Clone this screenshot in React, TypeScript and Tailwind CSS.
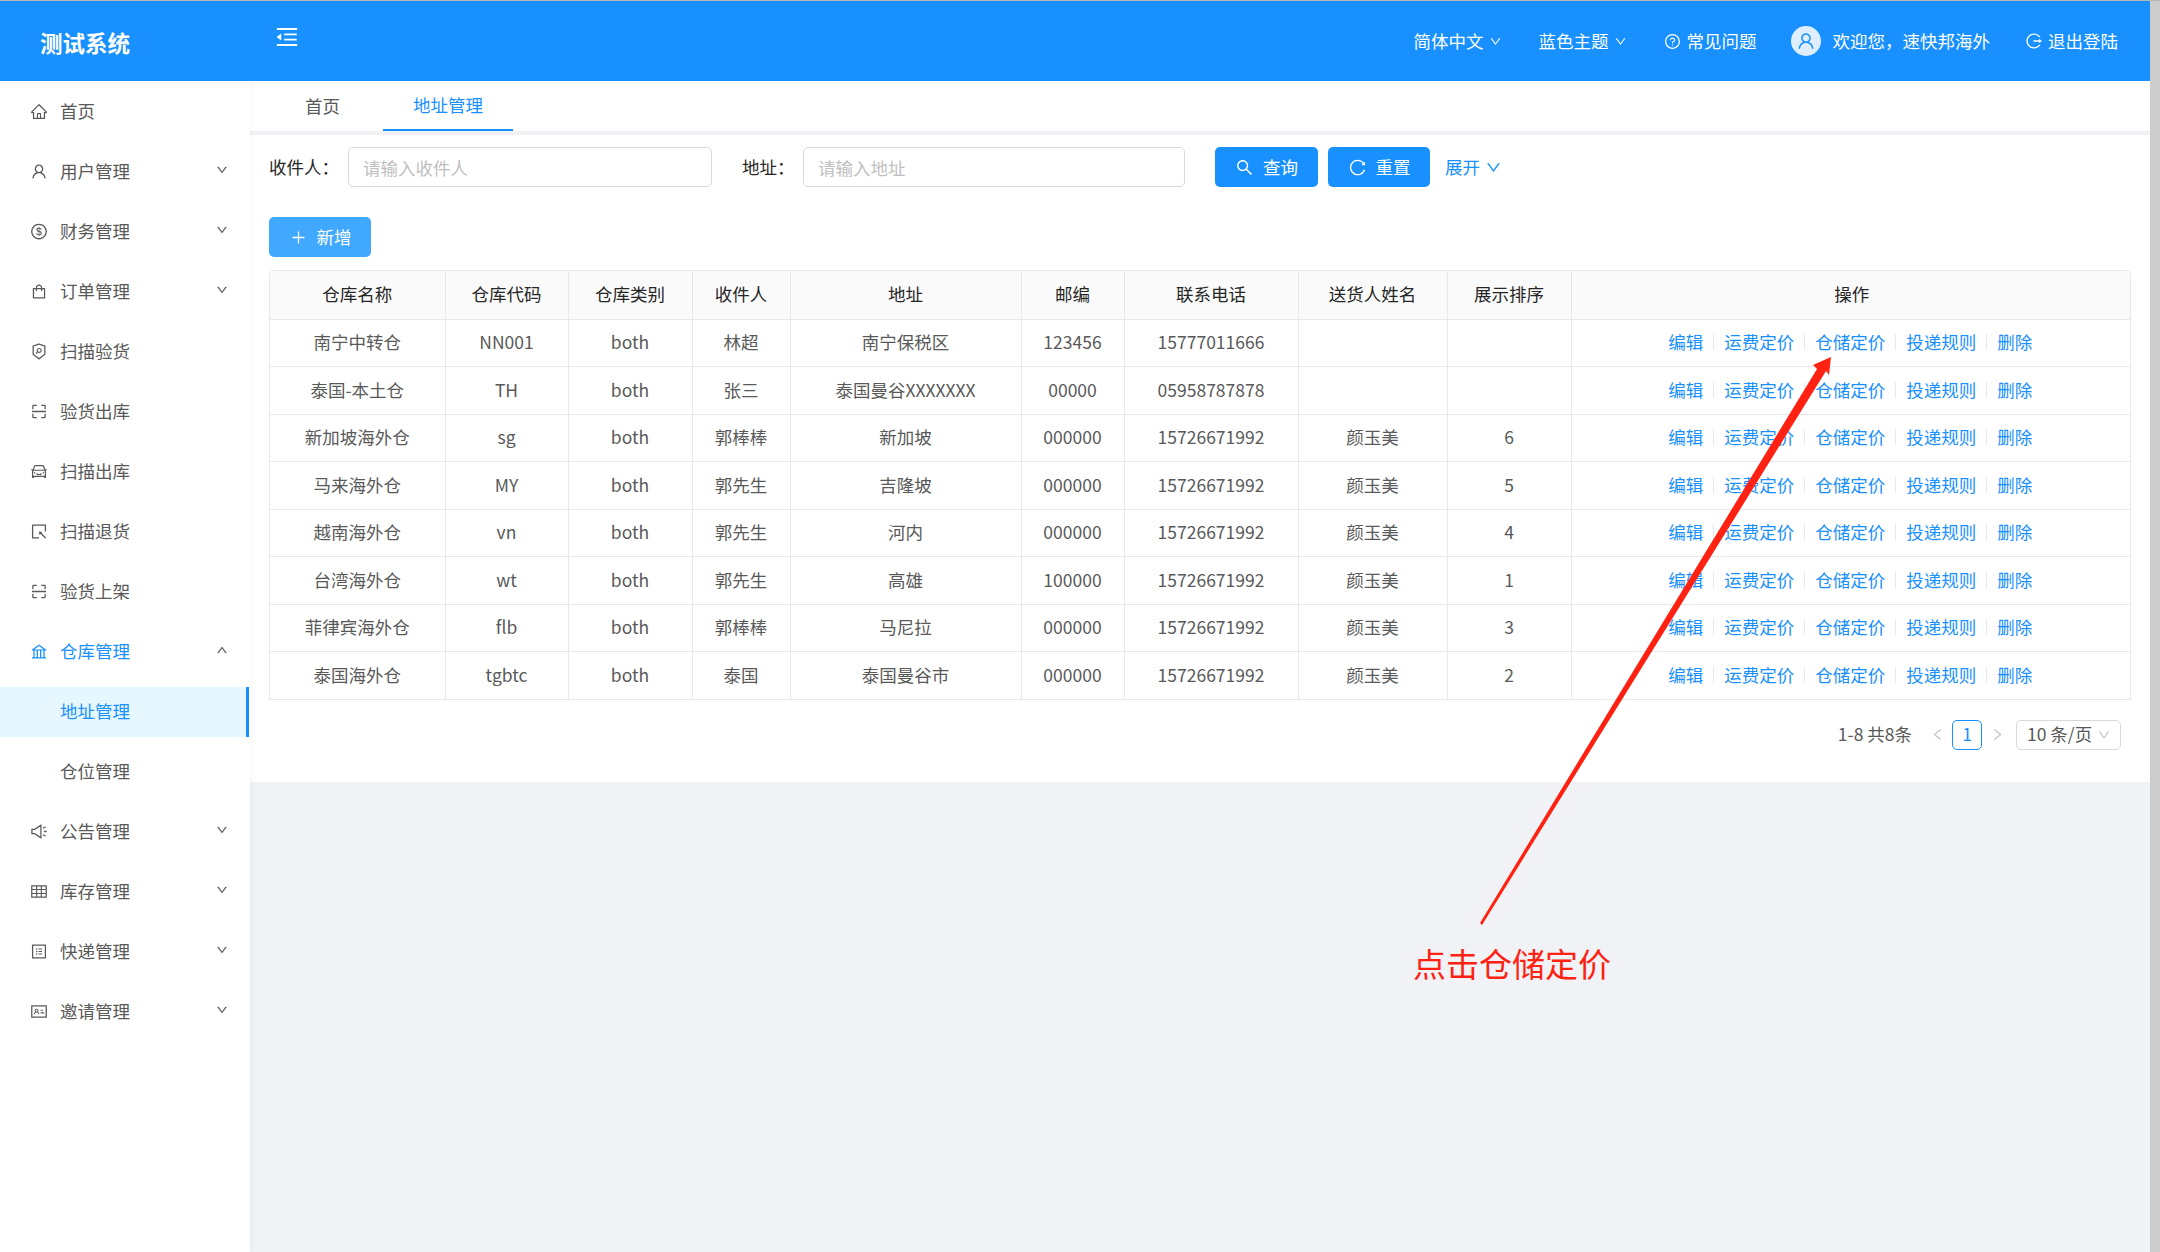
import React from "react";
import {
  AiOutlineHome, AiOutlineUser, AiOutlineDollar, AiOutlineShopping, AiOutlineSecurityScan, AiOutlineScan,
  AiOutlineCar, AiOutlineSelect, AiOutlineBank, AiOutlineSound, AiOutlineTable, AiOutlineProfile,
  AiOutlineIdcard, AiOutlineDown, AiOutlineUp, AiOutlineSearch, AiOutlineReload, AiOutlinePlus,
  AiOutlineQuestionCircle, AiOutlineLogout, AiOutlineMenuFold, AiOutlineLeft, AiOutlineRight,
} from "react-icons/ai";

const menu: { icon?: React.ComponentType<{ className?: string }>; label: string; arrow?: "down" | "up"; state?: string }[] = [
  { icon: AiOutlineHome, label: "首页" },
  { icon: AiOutlineUser, label: "用户管理", arrow: "down" },
  { icon: AiOutlineDollar, label: "财务管理", arrow: "down" },
  { icon: AiOutlineShopping, label: "订单管理", arrow: "down" },
  { icon: AiOutlineSecurityScan, label: "扫描验货" },
  { icon: AiOutlineScan, label: "验货出库" },
  { icon: AiOutlineCar, label: "扫描出库" },
  { icon: AiOutlineSelect, label: "扫描退货" },
  { icon: AiOutlineScan, label: "验货上架" },
  { icon: AiOutlineBank, label: "仓库管理", arrow: "up", state: "open" },
  { label: "地址管理", state: "active" },
  { label: "仓位管理" },
  { icon: AiOutlineSound, label: "公告管理", arrow: "down" },
  { icon: AiOutlineTable, label: "库存管理", arrow: "down" },
  { icon: AiOutlineProfile, label: "快递管理", arrow: "down" },
  { icon: AiOutlineIdcard, label: "邀请管理", arrow: "down" },
];

const rows = [
  ["南宁中转仓", "NN001", "both", "林超", "南宁保税区", "123456", "15777011666", "", ""],
  ["泰国-本土仓", "TH", "both", "张三", "泰国曼谷XXXXXXX", "00000", "05958787878", "", ""],
  ["新加坡海外仓", "sg", "both", "郭棒棒", "新加坡", "000000", "15726671992", "颜玉美", "6"],
  ["马来海外仓", "MY", "both", "郭先生", "吉隆坡", "000000", "15726671992", "颜玉美", "5"],
  ["越南海外仓", "vn", "both", "郭先生", "河内", "000000", "15726671992", "颜玉美", "4"],
  ["台湾海外仓", "wt", "both", "郭先生", "高雄", "100000", "15726671992", "颜玉美", "1"],
  ["菲律宾海外仓", "flb", "both", "郭棒棒", "马尼拉", "000000", "15726671992", "颜玉美", "3"],
  ["泰国海外仓", "tgbtc", "both", "泰国", "泰国曼谷市", "000000", "15726671992", "颜玉美", "2"],
];

const headers = ["仓库名称", "仓库代码", "仓库类别", "收件人", "地址", "邮编", "联系电话", "送货人姓名", "展示排序", "操作"];
const colClasses = ["w-[175px]", "w-[123px]", "w-[124px]", "w-[98px]", "w-[231px]", "w-[103px]", "w-[174px]", "w-[149px]", "w-[124px]", "w-[561px]"];
const actions = ["编辑", "运费定价", "仓储定价", "投递规则", "删除"];

function Sidebar() {
  return (
    <aside className="w-[250px] shrink-0 bg-white pt-[5.5px] flex flex-col gap-[10px] relative z-10 shadow-[2px_0_6px_rgba(0,21,41,0.03)]">
      {menu.map((m) => {
        const blue = m.state === "open" || m.state === "active";
        const Icon = m.icon;
        return (
          <div
            key={m.label}
            className={
              "h-[50px] flex items-center text-[17.5px] pl-[30px] " +
              (m.state === "active" ? "bg-[#e6f7ff] w-[249px] border-r-[3px] border-[#1890ff] " : "") +
              (blue ? "text-[#1890ff]" : "text-[#595959]")
            }
          >
            <span className="w-[18px] h-[18px] mr-[12px] flex items-center justify-center">
              {Icon ? <Icon className="w-[19px] h-[19px]" /> : null}
            </span>
            <span>{m.label}</span>
            {m.arrow === "down" && <AiOutlineDown className="ml-auto mr-[22px] w-[12px] h-[12px] -mt-[4px] text-[#595959] stroke-current stroke-[30]" />}
            {m.arrow === "up" && <AiOutlineUp className="ml-auto mr-[22px] w-[12px] h-[12px] -mt-[4px] text-[#595959] stroke-current stroke-[30]" />}
          </div>
        );
      })}
    </aside>
  );
}

function Header() {
  return (
    <header className="h-[80px] bg-[#1890ff] flex items-center text-white text-[17.5px] shrink-0">
      <div className="w-[274px] pl-[40px] text-[22.5px] font-bold pt-[4px]">测试系统</div>
      <AiOutlineMenuFold className="w-[26px] h-[26px] -mt-[8px]" />
      <div className="ml-auto flex items-center">
        <span>简体中文</span>
        <AiOutlineDown className="w-[13px] h-[13px] ml-[5px] mt-[1px]" />
        <span className="ml-[37px]">蓝色主题</span>
        <AiOutlineDown className="w-[13px] h-[13px] ml-[5px] mt-[1px]" />
        <AiOutlineQuestionCircle className="w-[17px] h-[17px] ml-[37px]" />
        <span className="ml-[6px]">常见问题</span>
        <span className="ml-[34px] w-[30px] h-[30px] rounded-full bg-[#deeeff] flex items-center justify-center text-[#1890ff]">
          <AiOutlineUser className="w-[20px] h-[20px]" />
        </span>
        <span className="ml-[12px]">欢迎您，速快邦海外</span>
        <AiOutlineLogout className="w-[18px] h-[18px] ml-[35px]" />
        <span className="ml-[5px] mr-[32px]">退出登陆</span>
      </div>
    </header>
  );
}

function Actions() {
  return (
    <div className="flex items-center justify-center text-[#1890ff] pr-[3px]">
      {actions.map((a, i) => (
        <React.Fragment key={a}>
          {i > 0 && <span className="w-[1px] h-[16px] bg-[#e8e8e8] mx-[10px]" />}
          <span className="whitespace-nowrap">{a}</span>
        </React.Fragment>
      ))}
    </div>
  );
}

function Table() {
  return (
    <div className="mt-[13px] w-[1862px] border-x border-t border-[#e8e8e8] rounded-t-[5px] overflow-hidden">
      <table className="w-full table-fixed border-collapse text-[17.5px] text-center">
        <colgroup>
          {colClasses.map((c) => (
            <col key={c} className={c} />
          ))}
        </colgroup>
        <thead>
          <tr className="h-[48px] bg-[#fafafa] text-[#262626]">
            {headers.map((h, i) => (
              <th key={h} className={"font-normal border-b border-[#e8e8e8] p-0 pb-[1px] " + (i < 9 ? "border-r" : "")}>
                {h}
              </th>
            ))}
          </tr>
        </thead>
        <tbody className="text-[#595959]">
          {rows.map((r) => (
            <tr key={r[0]} className="h-[47.5px]">
              {r.map((c, i) => (
                <td key={i} className="border-b border-r border-[#e8e8e8] p-0 pb-[1px] whitespace-nowrap">
                  {c}
                </td>
              ))}
              <td className="border-b border-[#e8e8e8] p-0 pb-[1px]">
                <Actions />
              </td>
            </tr>
          ))}
        </tbody>
      </table>
    </div>
  );
}

function Card() {
  return (
    <section className="bg-white h-[647px] pl-[19px] pt-[12px] shrink-0">
      <div className="flex items-center h-[40px] text-[17.5px] text-[#262626]">
        <span className="w-[79px]">收件人：</span>
        <div className="w-[364px] h-[40px] rounded-[5px] border border-[#d9d9d9] flex items-center pl-[14px] pt-[2px] text-[#bfbfbf]">请输入收件人</div>
        <span className="ml-[30px] w-[61px]">地址：</span>
        <div className="w-[382px] h-[40px] rounded-[5px] border border-[#d9d9d9] flex items-center pl-[14px] pt-[2px] text-[#bfbfbf]">请输入地址</div>
        <button className="ml-[30px] w-[103px] h-[40px] rounded-[5px] bg-[#1890ff] text-white flex items-center justify-center gap-[9px]">
          <AiOutlineSearch className="w-[19px] h-[19px]" />
          <span>查询</span>
        </button>
        <button className="ml-[10px] w-[102px] h-[40px] rounded-[5px] bg-[#1890ff] text-white flex items-center justify-center gap-[9px]">
          <AiOutlineReload className="w-[19px] h-[19px]" />
          <span>重置</span>
        </button>
        <span className="ml-[15px] text-[#1890ff]">展开</span>
        <AiOutlineDown className="w-[17px] h-[17px] ml-[5px] text-[#1890ff]" />
      </div>
      <button className="mt-[30px] w-[102px] h-[40px] rounded-[5px] bg-[#40a9ff] text-white text-[17.5px] flex items-center justify-center gap-[10px] pl-[1px]">
        <AiOutlinePlus className="w-[17px] h-[17px]" />
        <span>新增</span>
      </button>
      <Table />
      <div className="mt-[20px] w-[1852px] h-[30px] flex items-center justify-end text-[17.5px] text-[#595959]">
        <span>1-8 共8条</span>
        <AiOutlineLeft className="w-[15px] h-[15px] ml-[18px] text-[#bfbfbf]" />
        <span className="ml-[7px] w-[30px] h-[30px] rounded-[5px] border border-[#1890ff] text-[#1890ff] flex items-center justify-center">1</span>
        <AiOutlineRight className="w-[15px] h-[15px] ml-[8px] text-[#bfbfbf]" />
        <div className="ml-[11px] w-[105px] h-[30px] rounded-[5px] border border-[#d9d9d9] flex items-center pl-[10px]">
          <span className="whitespace-nowrap">10 条/页</span>
          <AiOutlineDown className="w-[14px] h-[14px] ml-[5px] text-[#bfbfbf]" />
        </div>
      </div>
    </section>
  );
}

function Annotation() {
  return (
    <>
      <svg className="absolute left-0 top-0 pointer-events-none" width="2160" height="1252" viewBox="0 0 2160 1252">
        <polygon fill="#ff2212" points="1480,923 1482,925 1826,371 1829,375 1831,357 1813,365 1817,369" />
      </svg>
      <div className="absolute left-[1413px] top-[940px] text-[33px] leading-[46px] text-[#ff2212] whitespace-nowrap">点击仓储定价</div>
    </>
  );
}

export default function App() {
  return (
    <div className="relative w-[2160px] h-[1252px] overflow-hidden flex flex-col bg-[#f0f2f5] font-['Noto_Sans_CJK_SC','Noto_Sans',sans-serif]">
      <div className="h-[1px] bg-[#b8b8b8] shrink-0" />
      <div className="flex-1 flex min-h-0">
        <div className="flex-1 flex flex-col min-w-0">
          <Header />
          <div className="flex-1 flex min-h-0">
            <Sidebar />
            <main className="flex-1 min-w-0 flex flex-col">
              <nav className="h-[50px] bg-white flex text-[17.5px] text-[#595959] shrink-0">
                <div className="w-[133px] flex items-center justify-center pl-[12px]">首页</div>
                <div className="w-[130px] flex items-center justify-center text-[#1890ff] border-b-2 border-[#1890ff]">地址管理</div>
              </nav>
              <div className="h-[4px] shrink-0" />
              <Card />
            </main>
          </div>
        </div>
        <div className="w-[10px] bg-[#cccccc] shrink-0" />
      </div>
      <Annotation />
    </div>
  );
}
